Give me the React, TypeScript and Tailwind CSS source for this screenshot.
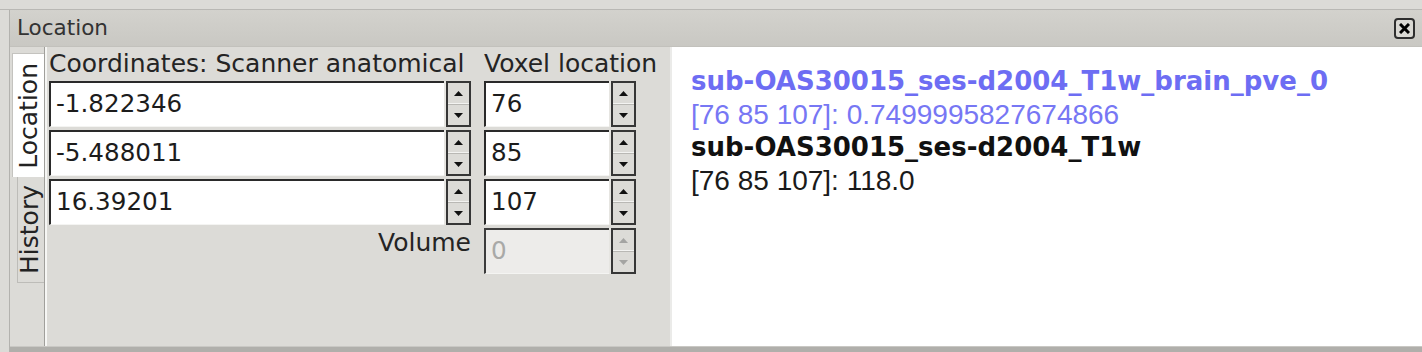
import React from "react";

function Arrow({ up, disabled }: { up?: boolean; disabled?: boolean }) {
  return (
    <svg width="9" height="5" viewBox="0 0 9 5" className="block">
      <polygon
        points={up ? "4.5,0 9,5 0,5" : "0,0 9,0 4.5,5"}
        fill={disabled ? "#a4a4a2" : "#111"}
      />
    </svg>
  );
}

function SpinBox({ value, disabled }: { value: string; disabled?: boolean }) {
  return (
    <div className="flex h-[46px] w-full">
      <div
        className={
          disabled
            ? "flex-1 flex items-center pl-[5px] bg-[#edecea] border-t-2 border-l-2 border-[#3c3c3c] border-b border-b-[#f4f4f2] text-[24.6px] text-[#a9a9a7]"
            : "flex-1 flex items-center pl-[5px] bg-white border-t-2 border-l-2 border-[#2a2a2a] border-b border-b-[#f4f4f2] text-[24.6px] text-[#1c1c1c]"
        }
      >
        {value}
      </div>
      <div className="w-[2px] bg-[#e6e5e1]" />
      <div className="w-[25px] flex flex-col border-2 border-[#363636] bg-[#dcdbd7]">
        <div className="flex-1 flex items-center justify-center border-b border-[#f3f3f1]">
          <Arrow up disabled={disabled} />
        </div>
        <div className="flex-1 flex items-center justify-center border-t border-[#b9b8b4]">
          <Arrow disabled={disabled} />
        </div>
      </div>
    </div>
  );
}

export default function App() {
  return (
    <div className="w-[1422px] h-[352px] bg-[#d8d7d3] flex flex-col font-['DejaVu_Sans',sans-serif] overflow-hidden">
      <div className="h-[10px] border-b border-[#b9b8b4] bg-[#dcdbd7]" />
      <div className="flex flex-1 min-h-0">
        <div className="w-[10px] bg-[#dcdbd7] border-r border-[#b3b2ae]" />
        <div className="flex-1 flex flex-col min-w-0">
          {/* title bar */}
          <div className="h-[37px] flex items-center justify-between pl-[7px] pr-[7px] bg-gradient-to-b from-[#d3d2cd] to-[#c9c8c3] border-b border-[#c2c1bc]">
            <span className="text-[21.5px] text-[#333]">Location</span>
            <div className="w-[21px] h-[21px] rounded-[4px] border-2 border-[#2e2e2e] bg-[#d9d8d3] flex items-center justify-center">
              <svg width="11" height="11" viewBox="0 0 11 11">
                <path d="M1 1 L10 10 M10 1 L1 10" stroke="#000" strokeWidth="3" />
              </svg>
            </div>
          </div>

          {/* content */}
          <div className="flex-1 flex min-h-0">
            {/* left panel */}
            <div className="w-[660px] flex bg-[#dcdbd7]">
              {/* vertical tabs */}
              <div className="w-[34px] flex flex-col pt-[6px] pl-[2px]">
                <div className="h-[124px] bg-white border-t border-l border-[#c4c3bf] flex items-center justify-center">
                  <span className="[writing-mode:vertical-rl] rotate-180 text-[25px] text-[#222] leading-none">
                    Location
                  </span>
                </div>
                <div className="h-[106px] ml-[5px] border-b border-l border-[#bdbcb8] flex items-center justify-center">
                  <span className="[writing-mode:vertical-rl] rotate-180 text-[25px] text-[#222] leading-none -ml-[3px]">
                    History
                  </span>
                </div>
              </div>
              {/* pane */}
              <div className="flex-1 border-l border-[#a09f9b]">
                <div className="h-full border-l-2 border-[#f6f6f4] pl-[2px] pt-[2px]">
                  <div className="grid grid-cols-[422px_152px] gap-x-[13px] gap-y-[3px] text-[25px] text-[#242424]">
                    <div className="h-[29px] leading-[29px] whitespace-nowrap">
                      Coordinates: Scanner anatomical
                    </div>
                    <div className="h-[29px] leading-[29px] whitespace-nowrap">
                      Voxel location
                    </div>
                    <SpinBox value="-1.822346" />
                    <SpinBox value="76" />
                    <SpinBox value="-5.488011" />
                    <SpinBox value="85" />
                    <SpinBox value="16.39201" />
                    <SpinBox value="107" />
                    <div className="text-right leading-[29px]">Volume</div>
                    <SpinBox value="0" disabled />
                  </div>
                </div>
              </div>
            </div>
            {/* right panel */}
            <div className="flex-1 bg-white border-l-2 border-[#ebebe9] pl-[19px] pt-[18px] leading-[33px]">
              <div className="text-[26px] font-bold text-[#6d6df3]">
                sub-OAS30015_ses-d2004_T1w_brain_pve_0
              </div>
              <div className="text-[28px] font-['Liberation_Sans',sans-serif] text-[#7777f4]">
                [76 85 107]: 0.7499995827674866
              </div>
              <div className="text-[26px] font-bold text-[#111]">
                sub-OAS30015_ses-d2004_T1w
              </div>
              <div className="text-[28px] font-['Liberation_Sans',sans-serif] text-[#1a1a1a]">
                [76 85 107]: 118.0
              </div>
            </div>
          </div>
          <div className="h-[6px] border-t border-[#c9c8c4] bg-[#b0afab]" />
        </div>
      </div>
    </div>
  );
}
